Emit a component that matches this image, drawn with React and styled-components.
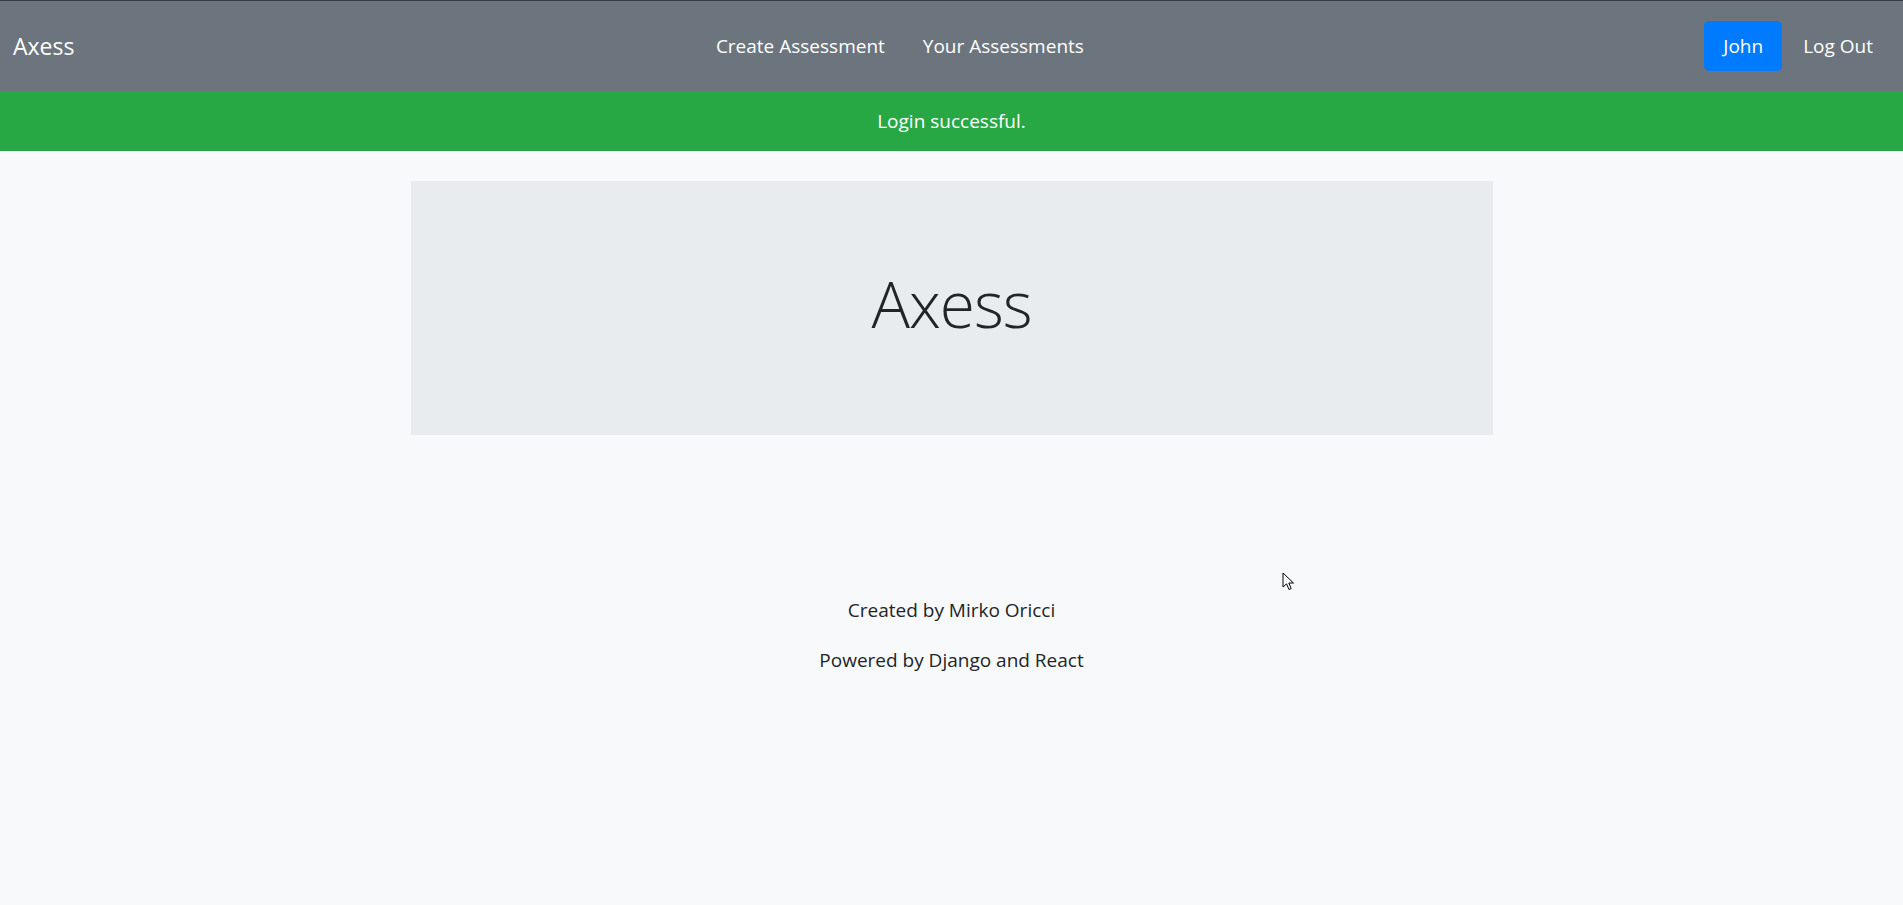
import React from "react";
import styled, { createGlobalStyle } from "styled-components";

const GlobalStyle = createGlobalStyle`
  html, body {
    margin: 0;
    padding: 0;
    background: #f8f9fa;
    font-family: "Open Sans", "Noto Sans", sans-serif;
    color: #212529;
  }
  #root {
    min-height: 100vh;
    position: relative;
  }
`;

const Navbar = styled.nav`
  display: flex;
  align-items: center;
  height: 90px;
  padding: 0 30px 0 13px;
  background: #6c757d;
  border-top: 1px solid #343a40;
`;

const Brand = styled.a`
  color: #fff;
  font-size: 23px;
  margin-right: 21px;
  cursor: pointer;
`;

const NavLinks = styled.div`
  display: flex;
  margin: 0 auto;
`;

const NavLink = styled.a`
  color: #fff;
  font-size: 19px;
  padding: 0 ${(p) => (p.$flush ? 0 : 19)}px;
  cursor: pointer;
`;

const RightGroup = styled.div`
  display: flex;
  align-items: center;
  gap: 21px;
`;

const UserButton = styled.button`
  height: 50px;
  padding: 0 19px;
  border: none;
  border-radius: 5px;
  background: #007bff;
  color: #fff;
  font-family: inherit;
  font-size: 19px;
  cursor: pointer;
`;

const Alert = styled.div`
  display: flex;
  align-items: center;
  justify-content: center;
  height: 60px;
  background: #28a745;
  color: #fff;
  font-size: 19px;
`;

const Main = styled.main`
  display: flex;
  flex-direction: column;
  align-items: center;
  padding-top: 30px;
`;

const Jumbotron = styled.section`
  display: flex;
  align-items: center;
  justify-content: center;
  box-sizing: border-box;
  width: 1082px;
  height: 254px;
  padding-bottom: 10px;
  background: #e9ecef;
`;

const Title = styled.h1`
  margin: 0;
  font-size: 64px;
  font-weight: 300;
  color: #212529;
  letter-spacing: -1px;
`;

const Footer = styled.footer`
  display: flex;
  flex-direction: column;
  align-items: center;
  gap: 21px;
  margin-top: 161px;
  p {
    margin: 0;
    font-size: 19px;
    line-height: 29px;
  }
`;

const Cursor = styled.svg`
  position: absolute;
  left: 1282px;
  top: 572px;
`;

const App = () => {
  return (
    <>
      <GlobalStyle />
      <Navbar>
        <Brand>Axess</Brand>
        <NavLinks>
          <NavLink>Create Assessment</NavLink>
          <NavLink>Your Assessments</NavLink>
        </NavLinks>
        <RightGroup>
          <UserButton>John</UserButton>
          <NavLink $flush>Log Out</NavLink>
        </RightGroup>
      </Navbar>
      <Alert>Login successful.</Alert>
      <Main>
        <Jumbotron>
          <Title>Axess</Title>
        </Jumbotron>
        <Footer>
          <p>Created by Mirko Oricci</p>
          <p>Powered by Django and React</p>
        </Footer>
      </Main>
      <Cursor width="14" height="20" viewBox="0 0 14 20">
        <path
          d="M1 1 L1 15 L4.5 11.8 L7 17.5 L9.2 16.5 L6.8 11 L11.5 11 Z"
          fill="#fff"
          stroke="#000"
          strokeWidth="1"
          strokeLinejoin="round"
        />
      </Cursor>
    </>
  );
};

export default App;
